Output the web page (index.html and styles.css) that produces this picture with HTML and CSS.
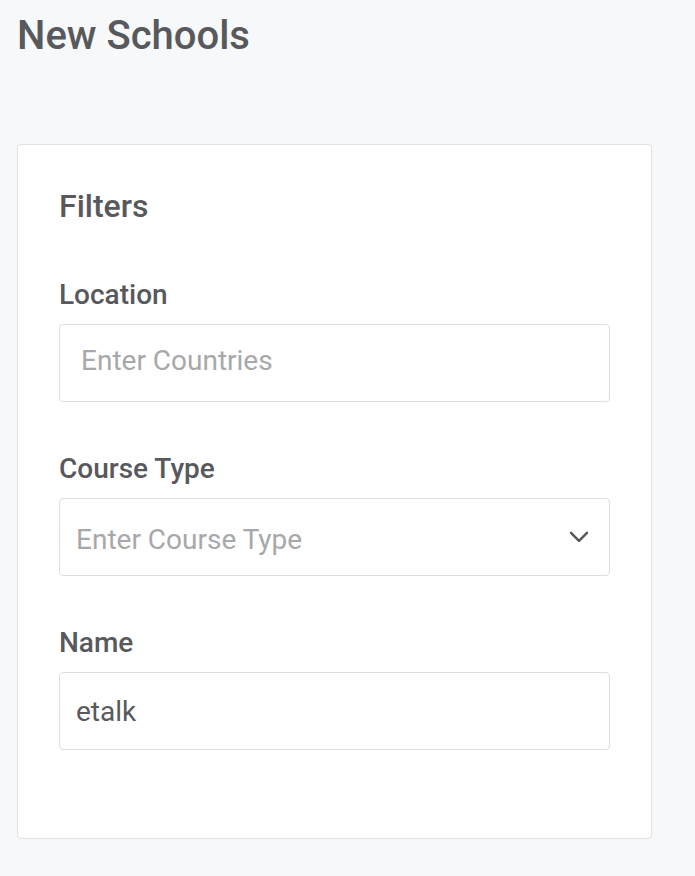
FILE: index.html
```html
<!DOCTYPE html>
<html lang="en">
<head>
<meta charset="utf-8">
<title>New Schools</title>
<link rel="stylesheet" href="styles.css">
</head>
<body>
  <h1 class="page-title">New Schools</h1>
  <section class="card">
    <h2 class="card-title">Filters</h2>
    <div class="field">
      <label class="field-label">Location</label>
      <div class="input input--wide"><span class="placeholder">Enter Countries</span></div>
    </div>
    <div class="field">
      <label class="field-label">Course Type</label>
      <div class="input input--select">
        <span class="placeholder">Enter Course Type</span>
        <svg class="chevron" width="20" height="12" viewBox="0 0 20 12" aria-hidden="true">
          <path d="M2 1.8 L10 9.8 L18 1.8" fill="none" stroke="#555759" stroke-width="2.4" stroke-linecap="round" stroke-linejoin="round"/>
        </svg>
      </div>
    </div>
    <div class="field">
      <label class="field-label">Name</label>
      <div class="input"><span class="value">etalk</span></div>
    </div>
  </section>
</body>
</html>
```

FILE: styles.css
```css
html, body {
  margin: 0;
  padding: 0;
}
body {
  background: #f7f8fa;
  font-family: Roboto, "Liberation Sans", Arial, sans-serif;
  color: #58595c;
  width: 695px;
  height: 876px;
  overflow: hidden;
}
.page-title {
  margin: 0;
  padding: 13px 0 0 17px;
  font-size: 40px;
  font-weight: 500;
  line-height: 46px;
  color: #58595c;
}
.card {
  margin: 85px 0 0 17px;
  width: 633px;
  box-sizing: content-box;
  background: #ffffff;
  border: 1px solid #dfe1e5;
  border-radius: 4px;
  padding: 42px 0 88px 0;
}
.card-title {
  margin: 0 0 0 41px;
  font-size: 32px;
  font-weight: 500;
  line-height: 38px;
}
.field {
  margin: 0 41px;
}
.field + .field {
  margin-top: 52px;
}
.card-title + .field {
  margin-top: 55px;
}
.field-label {
  display: block;
  font-size: 28px;
  font-weight: 500;
  line-height: 30px;
  margin-bottom: 14px;
}
.input {
  box-sizing: border-box;
  height: 78px;
  border: 1.5px solid #dcdfe3;
  border-radius: 4px;
  background: #fff;
  display: flex;
  align-items: center;
  justify-content: space-between;
  padding: 0 20px 0 16px;
  font-size: 28px;
  font-weight: 400;
}
.input--wide {
  padding-left: 21px;
  padding-bottom: 6px;
}
.input--select {
  padding-top: 5px;
}
.placeholder {
  color: #a7a8aa;
}
.value {
  color: #58595c;
}
.chevron {
  display: block;
  margin-top: -5px;
}
```
